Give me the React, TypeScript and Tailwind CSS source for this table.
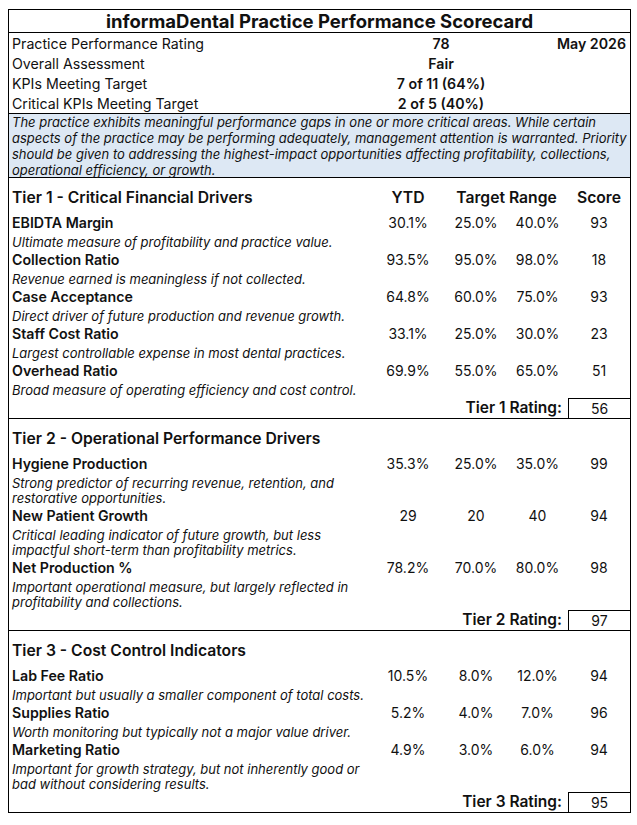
import React from 'react';

interface Kpi { name: string; desc: string[]; ytd: string; low: string; high: string; score: number; }
interface Tier { title: string; label: string; rating: number; kpis: Kpi[]; }

const TIERS: Tier[] = [
  {
    title: 'Tier 1 - Critical Financial Drivers', label: 'Tier 1 Rating:', rating: 56,
    kpis: [
      { name: 'EBIDTA Margin', desc: ['Ultimate measure of profitability and practice value.'], ytd: '30.1%', low: '25.0%', high: '40.0%', score: 93 },
      { name: 'Collection Ratio', desc: ['Revenue earned is meaningless if not collected.'], ytd: '93.5%', low: '95.0%', high: '98.0%', score: 18 },
      { name: 'Case Acceptance', desc: ['Direct driver of future production and revenue growth.'], ytd: '64.8%', low: '60.0%', high: '75.0%', score: 93 },
      { name: 'Staff Cost Ratio', desc: ['Largest controllable expense in most dental practices.'], ytd: '33.1%', low: '25.0%', high: '30.0%', score: 23 },
      { name: 'Overhead Ratio', desc: ['Broad measure of operating efficiency and cost control.'], ytd: '69.9%', low: '55.0%', high: '65.0%', score: 51 },
    ],
  },
  {
    title: 'Tier 2 - Operational Performance Drivers', label: 'Tier 2 Rating:', rating: 97,
    kpis: [
      { name: 'Hygiene Production', desc: ['Strong predictor of recurring revenue, retention, and', 'restorative opportunities.'], ytd: '35.3%', low: '25.0%', high: '35.0%', score: 99 },
      { name: 'New Patient Growth', desc: ['Critical leading indicator of future growth, but less', 'impactful short-term than profitability metrics.'], ytd: '29', low: '20', high: '40', score: 94 },
      { name: 'Net Production %', desc: ['Important operational measure, but largely reflected in', 'profitability and collections.'], ytd: '78.2%', low: '70.0%', high: '80.0%', score: 98 },
    ],
  },
  {
    title: 'Tier 3 - Cost Control Indicators', label: 'Tier 3 Rating:', rating: 95,
    kpis: [
      { name: 'Lab Fee Ratio', desc: ['Important but usually a smaller component of total costs.'], ytd: '10.5%', low: '8.0%', high: '12.0%', score: 94 },
      { name: 'Supplies Ratio', desc: ['Worth monitoring but typically not a major value driver.'], ytd: '5.2%', low: '4.0%', high: '7.0%', score: 96 },
      { name: 'Marketing Ratio', desc: ['Important for growth strategy, but not inherently good or', 'bad without considering results.'], ytd: '4.9%', low: '3.0%', high: '6.0%', score: 94 },
    ],
  },
];

const SUMMARY = [
  { label: 'Practice Performance Rating', value: '78', extra: 'May 2026' },
  { label: 'Overall Assessment', value: 'Fair' },
  { label: 'KPIs Meeting Target', value: '7 of 11 (64%)' },
  { label: 'Critical KPIs Meeting Target', value: '2 of 5 (40%)' },
];

const ASSESSMENT = [
  'The practice exhibits meaningful performance gaps in one or more critical areas. While certain',
  'aspects of the practice may be performing adequately, management attention is warranted. Priority',
  'should be given to addressing the highest-impact opportunities affecting profitability, collections,',
  'operational efficiency, or growth.',
];

const COLS = 'grid grid-cols-[362px_74px_62px_61px_1fr]';

function TierBlock({ tier, first }: { tier: Tier; first?: boolean }) {
  return (
    <div className="border-t border-black">
      <div className={`${COLS} pt-[10px] pb-[5px] leading-[20px] text-[15.7px] font-semibold`}>
        <div className="pl-[3px]">{tier.title}</div>
        {first && (
          <>
            <div className="text-center">YTD</div>
            <div className="col-span-2 text-center">Target Range</div>
            <div className="text-center">Score</div>
          </>
        )}
      </div>
      {tier.kpis.map((k) => (
        <div key={k.name} className={COLS}>
          <div className="pl-[3px] h-[20px] leading-[20px] text-[14.2px] font-semibold">{k.name}</div>
          <div className="text-center text-[14px] leading-[20px]">{k.ytd}</div>
          <div className="text-center text-[14px] leading-[20px]">{k.low}</div>
          <div className="text-center text-[14px] leading-[20px]">{k.high}</div>
          <div className="text-center text-[14px] leading-[20px]">{k.score}</div>
          <div className="col-span-5 pl-[3px] pt-[2px] text-[13px] italic leading-[15px] whitespace-nowrap">
            {k.desc.map((d) => <div key={d}>{d}</div>)}
          </div>
        </div>
      ))}
      <div className={`${COLS} h-[20px] items-end`}>
        <div className="col-span-4 text-right pr-[6px] text-[15.5px] font-semibold leading-[20px]">{tier.label}</div>
        <div className="border-t border-l border-black h-[20px] text-center text-[14px] leading-[19px]">{tier.rating}</div>
      </div>
    </div>
  );
}

export default function App() {
  return (
    <div className="bg-white w-[637px] h-[825px] pt-[9px] pl-[8px] text-[#111]" style={{ fontFamily: 'Inter, "Noto Sans", sans-serif' }}>
      <div className="w-[623px] border border-black">
        <div className="h-[23px] text-center text-[18.5px] font-bold leading-[22px] border-b border-black">
          informaDental Practice Performance Scorecard
        </div>
        {SUMMARY.map((s) => (
          <div key={s.label} className="grid grid-cols-[370px_124px_1fr] h-[20px] items-center text-[14.2px]">
            <div className="pl-[3px]">{s.label}</div>
            <div className="text-center font-semibold">{s.value}</div>
            <div className="text-right pr-[4px] font-semibold">{s.extra}</div>
          </div>
        ))}
        <div className="border-t border-black bg-[#dde8f4] px-[3px] h-[64px] text-[13px] italic leading-[16px] whitespace-nowrap">
          {ASSESSMENT.map((l) => <div key={l}>{l}</div>)}
        </div>
        {TIERS.map((t, i) => (
          <TierBlock key={t.title} tier={t} first={i === 0} />
        ))}
      </div>
    </div>
  );
}
